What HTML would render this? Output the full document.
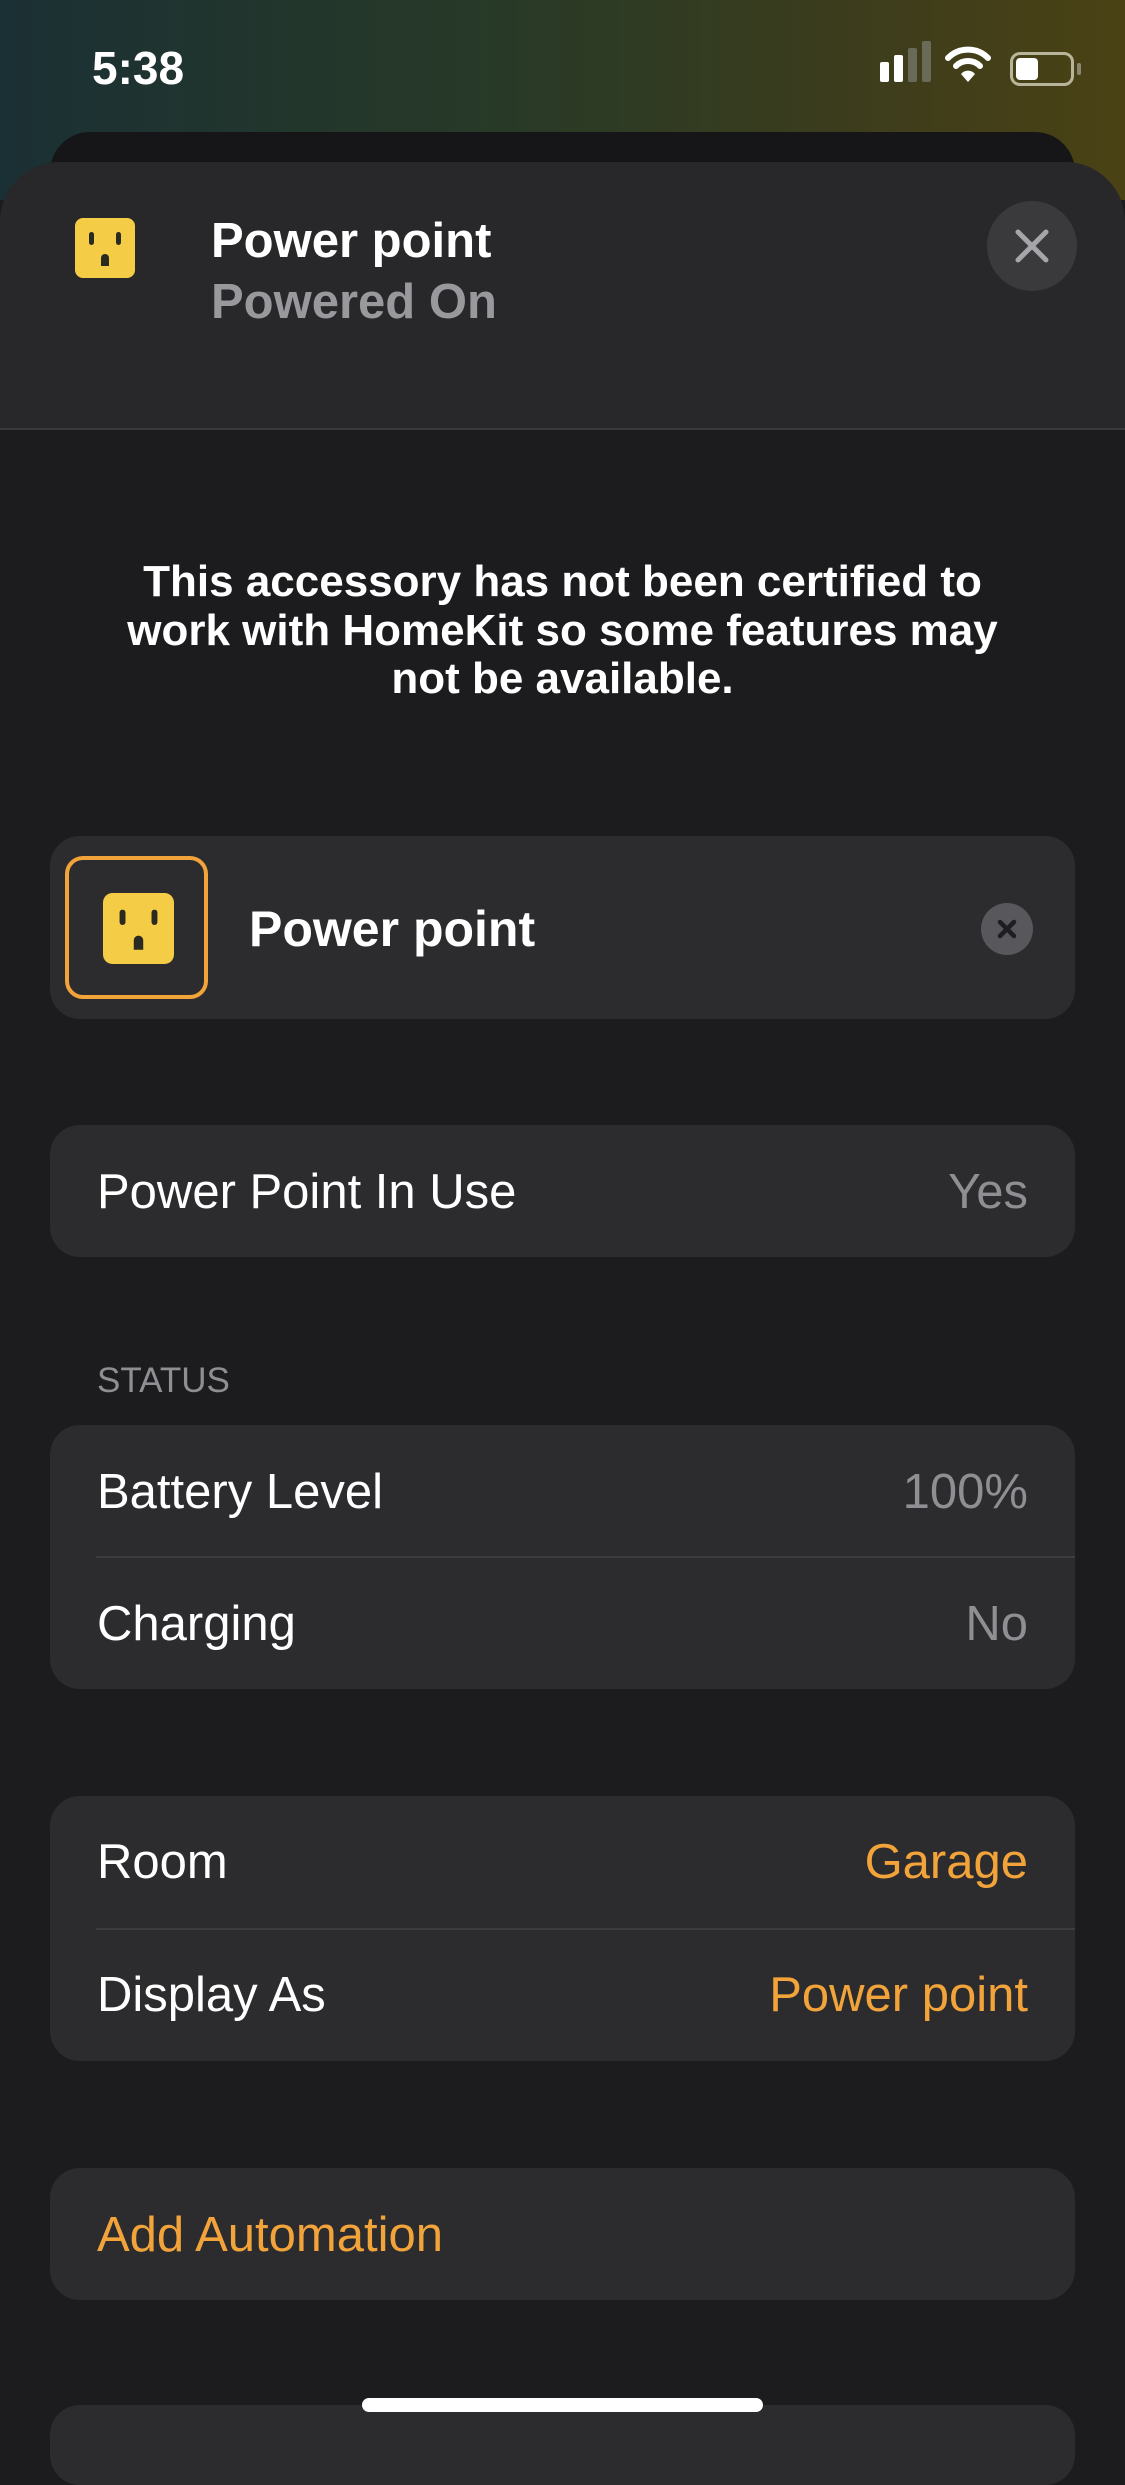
<!DOCTYPE html>
<html><head><meta charset="utf-8"><style>
*{margin:0;padding:0;box-sizing:border-box}
body{width:1125px;height:2436px;position:relative;overflow:hidden;background:#1c1c1e;font-family:"Liberation Sans",sans-serif;color:#fff}
.a{position:absolute}
.t{position:absolute;line-height:60px;height:60px;white-space:nowrap}
.card{position:absolute;left:50px;width:1025px;background:#2c2c2e;border-radius:30px}
.g{color:#8e8e93}
.o{color:#f2a33a}
.div{position:absolute;left:96px;right:50px;height:1.5px;background:#3d3d40}
.f{font-size:49px}
</style></head><body>
<div class="a" style="left:0;top:0;width:1125px;height:200px;background:linear-gradient(90deg,#1b3034 0%,#283a27 45%,#3f3d1b 80%,#4a4214 100%)"></div>
<div class="t" style="left:92px;top:38px;font-size:46px;font-weight:bold">5:38</div>
<div class="a" style="left:880px;top:62px;width:9px;height:20px;background:#fff;border-radius:2px"></div>
<div class="a" style="left:894px;top:55px;width:9px;height:27px;background:#fff;border-radius:2px"></div>
<div class="a" style="left:908px;top:48px;width:9px;height:34px;background:#6a6a58;border-radius:2px"></div>
<div class="a" style="left:922px;top:41px;width:9px;height:41px;background:#6a6a58;border-radius:2px"></div>
<svg class="a" style="left:945px;top:44px" width="46" height="40" viewBox="0 0 46 40"><path d="M3 14 A28 28 0 0 1 43 14" stroke="#fff" stroke-width="6" fill="none" stroke-linecap="round"/><path d="M11 22 A17 17 0 0 1 35 22" stroke="#fff" stroke-width="6" fill="none" stroke-linecap="round"/><path d="M23 38 L16 30 A9 9 0 0 1 30 30 Z" fill="#fff"/></svg>
<div class="a" style="left:1010px;top:52px;width:64px;height:34px;border:3px solid #b8b59a;border-radius:10px"></div>
<div class="a" style="left:1016px;top:58px;width:22px;height:22px;background:#fff;border-radius:4px"></div>
<div class="a" style="left:1077px;top:63px;width:4px;height:12px;background:#8a8870;border-radius:2px"></div>
<div class="a" style="left:50px;top:132px;width:1025px;height:120px;background:#161618;border-radius:40px"></div>
<div class="a" style="left:0;top:162px;width:1125px;height:2300px;background:#1c1c1e;border-radius:60px 60px 0 0;overflow:hidden">
 <div class="a" style="left:0;top:0;width:1125px;height:266px;background:#28282a"></div>
 <div class="a" style="left:0;top:266px;width:1125px;height:2px;background:#3a3a3c"></div>
</div>
<svg class="a" style="left:75px;top:218px" width="60" height="60" viewBox="0 0 60 60"><rect width="60" height="60" rx="8" fill="#f5cc45"/><rect x="14" y="14" width="5" height="13" rx="2.5" fill="#2a2a20"/><rect x="41" y="14" width="5" height="13" rx="2.5" fill="#2a2a20"/><path d="M26 48 V40 a4 4 0 0 1 8 0 V48 Z" fill="#2a2a20"/></svg>
<div class="t" style="left:211px;top:211px;font-size:49px;font-weight:bold">Power point</div>
<div class="t" style="left:211px;top:272px;font-size:49px;font-weight:bold;color:#98989d">Powered On</div>
<div class="a" style="left:987px;top:201px;width:90px;height:90px;border-radius:50%;background:#3a3a3c"></div>
<svg class="a" style="left:1012px;top:226px" width="40" height="40" viewBox="0 0 40 40"><path d="M6 6 L34 34 M34 6 L6 34" stroke="#a5a5aa" stroke-width="5" stroke-linecap="round"/></svg>
<div class="a" style="left:0;top:558px;width:1125px;text-align:center;font-size:44px;font-weight:bold;line-height:48.5px">This accessory has not been certified to<br>work with HomeKit so some features may<br>not be available.</div>
<div class="card" style="top:836px;height:183px"></div>
<div class="a" style="left:65px;top:856px;width:143px;height:143px;border:4px solid #f2a33a;border-radius:18px"></div>
<svg class="a" style="left:103px;top:893px" width="71" height="71" viewBox="0 0 60 60"><rect width="60" height="60" rx="8" fill="#f5cc45"/><rect x="14" y="14" width="5" height="13" rx="2.5" fill="#2a2a20"/><rect x="41" y="14" width="5" height="13" rx="2.5" fill="#2a2a20"/><path d="M26 48 V40 a4 4 0 0 1 8 0 V48 Z" fill="#2a2a20"/></svg>
<div class="t" style="left:249px;top:899px;font-size:50px;font-weight:bold">Power point</div>
<div class="a" style="left:981px;top:903px;width:52px;height:52px;border-radius:50%;background:#58585c"></div>
<svg class="a" style="left:995px;top:917px" width="24" height="24" viewBox="0 0 24 24"><path d="M5 5 L19 19 M19 5 L5 19" stroke="#1e1e20" stroke-width="4.5" stroke-linecap="round"/></svg>
<div class="card" style="top:1125px;height:132px"></div>
<div class="t f" style="left:97px;top:1162px">Power Point In Use</div>
<div class="t g f" style="top:1162px;right:97px">Yes</div>
<div class="t g" style="left:97px;top:1351px;font-size:35px">STATUS</div>
<div class="card" style="top:1425px;height:264px"></div>
<div class="t f" style="left:97px;top:1462px">Battery Level</div>
<div class="t g f" style="right:97px;top:1462px">100%</div>
<div class="div" style="top:1556px"></div>
<div class="t f" style="left:97px;top:1594px">Charging</div>
<div class="t g f" style="right:97px;top:1594px">No</div>
<div class="card" style="top:1796px;height:265px"></div>
<div class="t f" style="left:97px;top:1832px">Room</div>
<div class="t o f" style="right:97px;top:1832px">Garage</div>
<div class="div" style="top:1928px"></div>
<div class="t f" style="left:97px;top:1965px">Display As</div>
<div class="t o f" style="right:97px;top:1965px">Power point</div>
<div class="card" style="top:2168px;height:132px"></div>
<div class="t o f" style="left:97px;top:2205px">Add Automation</div>
<div class="card" style="top:2405px;height:80px"></div>
<div class="a" style="left:362px;top:2398px;width:401px;height:14px;background:#fff;border-radius:7px"></div>
</body></html>
